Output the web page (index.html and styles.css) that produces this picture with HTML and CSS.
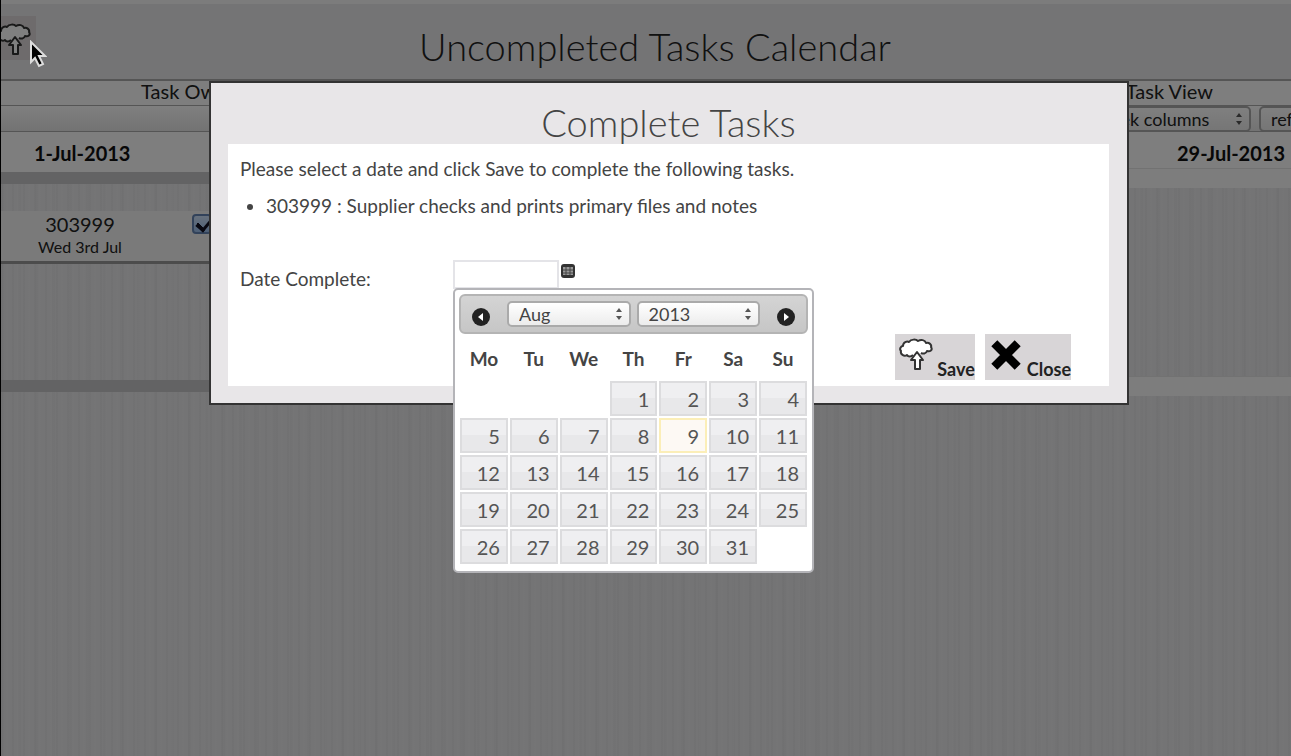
FILE: index.html
```html
<!DOCTYPE html>
<html lang="en">
<head>
    <meta charset="UTF-8">
    <meta name="viewport" content="width=device-width, initial-scale=1.0">
    <title>Uncompleted Tasks Calendar</title>
    <link rel="stylesheet" href="styles.css">
</head>
<body>
    <!-- shared icons -->
    <svg class="sprite" aria-hidden="true">
        <symbol id="icon-cloud" viewBox="0 0 34 34">
            <path d="M14 17 C12 19 9 19 8 17 C5 19 1 16 2 13 C0 11 2 8 4 8 C4 4 8 3 10 4 C12 1 17 1 19 3 C22 1 26 2 27 5 C30 4 33 7 32 9 C34 12 31 14 28 13 C27 16 24 16 22 15" />
            <path d="M18 14 L24 22 L21 22 L21 31 L16 31 L16 22 L12 22 Z" />
        </symbol>
        <symbol id="icon-arrows" viewBox="0 0 8 14">
            <path d="M4 1 L7 5 L1 5 Z M1 9 L7 9 L4 13 Z" />
        </symbol>
    </svg>

    <div class="page">
        <header class="page-header">
            <button class="header-save" aria-label="Save"><svg class="cloud"><use href="#icon-cloud" /></svg></button>
            <h1>Uncompleted Tasks Calendar</h1>
        </header>

        <div class="toolbar-labels">
            <span class="owner">Task Owner</span>
            <span class="view">Task View</span>
        </div>
        <div class="toolbar">
            <span class="select-wrap view-select">
                <select aria-label="Task View"><option>week columns</option></select>
                <svg class="arrows"><use href="#icon-arrows" /></svg>
            </span>
            <button class="refresh">refresh</button>
        </div>
        <div class="dates">
            <strong>1-Jul-2013</strong>
            <strong>29-Jul-2013</strong>
        </div>
        <div class="band"><div class="band-end"></div></div>
        <div class="week">
            <div class="task">
                <label for="task1">303999<small>Wed 3rd Jul</small></label>
                <input type="checkbox" id="task1" checked>
            </div>
        </div>
        <div class="band"><div class="band-end"></div></div>
    </div>

    <div class="overlay"></div>

    <div class="dialog" role="dialog" aria-labelledby="dialogTitle">
        <h2 id="dialogTitle">Complete Tasks</h2>
        <div class="dialog-body">
            <p>Please select a date and click Save to complete the following tasks.</p>
            <ul>
                <li>303999 : Supplier checks and prints primary files and notes</li>
            </ul>
            <div class="date-row">
                <label for="dateComplete">Date Complete:</label>
                <div class="date-field">
                    <input type="text" id="dateComplete">
                    <button class="trigger" aria-label="Open calendar">
                        <svg viewBox="0 0 14 14">
                            <rect x="0" y="0" width="14" height="14" rx="3" fill="#333" />
                            <path d="M2 3H12V11H2Z" fill="#999" />
                            <path d="M2 6H12M2 9H12M5 3V11M9 3V11" stroke="#444" />
                        </svg>
                    </button>

                    <div class="datepicker">
                        <div class="datepicker-header">
                            <button class="nav" aria-label="Prev"><svg viewBox="0 0 18 18"><circle cx="9" cy="9" r="9" /><path d="M11 5 L6 9 L11 13 Z" /></svg></button>
                            <span class="select-wrap">
                                <select aria-label="Month"><option>Aug</option></select>
                                <svg class="arrows"><use href="#icon-arrows" /></svg>
                            </span>
                            <span class="select-wrap">
                                <select aria-label="Year"><option>2013</option></select>
                                <svg class="arrows"><use href="#icon-arrows" /></svg>
                            </span>
                            <button class="nav" aria-label="Next"><svg viewBox="0 0 18 18"><circle cx="9" cy="9" r="9" /><path d="M7 5 L12 9 L7 13 Z" /></svg></button>
                        </div>
                        <table>
                            <thead>
                                <tr><th>Mo</th><th>Tu</th><th>We</th><th>Th</th><th>Fr</th><th>Sa</th><th>Su</th></tr>
                            </thead>
                            <tbody>
                                <tr><td></td><td></td><td></td><td><a href="#">1</a></td><td><a href="#">2</a></td><td><a href="#">3</a></td><td><a href="#">4</a></td></tr>
                                <tr><td><a href="#">5</a></td><td><a href="#">6</a></td><td><a href="#">7</a></td><td><a href="#">8</a></td><td><a href="#" class="today">9</a></td><td><a href="#">10</a></td><td><a href="#">11</a></td></tr>
                                <tr><td><a href="#">12</a></td><td><a href="#">13</a></td><td><a href="#">14</a></td><td><a href="#">15</a></td><td><a href="#">16</a></td><td><a href="#">17</a></td><td><a href="#">18</a></td></tr>
                                <tr><td><a href="#">19</a></td><td><a href="#">20</a></td><td><a href="#">21</a></td><td><a href="#">22</a></td><td><a href="#">23</a></td><td><a href="#">24</a></td><td><a href="#">25</a></td></tr>
                                <tr><td><a href="#">26</a></td><td><a href="#">27</a></td><td><a href="#">28</a></td><td><a href="#">29</a></td><td><a href="#">30</a></td><td><a href="#">31</a></td><td></td></tr>
                            </tbody>
                        </table>
                    </div>
                </div>
            </div>
            <div class="actions">
                <button class="action"><svg class="cloud"><use href="#icon-cloud" /></svg>Save</button>
                <button class="action"><svg class="cross" viewBox="0 0 32 32"><path d="M5 5 L27 27 M27 5 L5 27" /></svg>Close</button>
            </div>
        </div>
    </div>

    <svg class="pointer" viewBox="0 0 18 28" aria-hidden="true">
        <path d="M2 2 L2 22 L6 18 L10 26 L14 24 L10 16 L16 16 Z" />
    </svg>
</body>
</html>
```

FILE: styles.css
```css
* {
    box-sizing: border-box;
}

body {
    margin: 0;
    font-family: Lato, "Liberation Sans", sans-serif;
    font-size: 20px;
    color: #444;
}

button, select, input {
    font: inherit;
    color: inherit;
    margin: 0;
}

.sprite {
    display: none;
}

/* page behind the dialog */
.page {
    min-height: 100vh;
    overflow: hidden;
    border-left: 1px solid #000;
    color: #222;
    background:
        repeating-linear-gradient(90deg, rgba(0, 0, 0, 0.02) 0 2px, transparent 2px 5px, rgba(255, 255, 255, 0.08) 5px 7px, transparent 7px 11px),
        repeating-linear-gradient(90deg, rgba(0, 0, 0, 0.01) 0 3px, transparent 3px 17px),
        #e8e8ea;
}

.page-header {
    position: relative;
    height: 81px;
    padding: 18px 0 0 18px;
    border-top: 4px solid #f8f8f8;
    border-bottom: 2px solid #aaa;
    background: #e8e8eb;
}

.page-header h1 {
    margin: 0;
    text-align: center;
    font-size: 38px;
    line-height: 48px;
    font-weight: 300;
}

.header-save {
    position: absolute;
    left: -4px;
    top: 12px;
    width: 39px;
    height: 44px;
    padding: 3px 0 0;
    border: none;
    background: #dcd6d8;
}

.cloud {
    display: block;
    width: 34px;
    height: 34px;
    fill: #fff;
    stroke: #333;
    stroke-width: 2;
    stroke-linejoin: round;
}

.toolbar-labels {
    display: flex;
    justify-content: space-between;
    height: 24px;
    padding: 0 78px 0 140px;
    line-height: 20px;
    background: #fcfcfc;
}

.toolbar {
    display: flex;
    justify-content: flex-end;
    gap: 8px;
    height: 27px;
    border-top: 1px solid #aaa;
    border-bottom: 1px solid #aaa;
    background: linear-gradient(#fff, #e6e6e6);
}

.select-wrap {
    position: relative;
    display: block;
}

.select-wrap select {
    appearance: none;
    display: block;
    width: 100%;
    height: 26px;
    padding: 0 10px;
    border: 2px solid #aaa;
    border-radius: 5px;
    background: linear-gradient(#fff, #ececec);
    font-size: 18px;
    line-height: 20px;
}

.arrows {
    position: absolute;
    right: 8px;
    top: 6px;
    width: 8px;
    height: 14px;
    fill: #555;
}

.view-select {
    width: 180px;
}

.view-select select {
    padding-left: 24px;
}

.refresh {
    width: 90px;
    height: 26px;
    margin-right: -58px;
    padding: 0 10px;
    border: 2px solid #aaa;
    border-radius: 5px;
    background: linear-gradient(#fff, #ececec);
    font-size: 18px;
    line-height: 20px;
    text-align: left;
}

.dates {
    display: flex;
    justify-content: space-between;
    height: 40px;
    padding: 0 6px 0 33px;
    line-height: 42px;
    background: #fcfcfc;
    color: #111;
}

.band {
    display: flex;
    justify-content: flex-end;
    height: 12px;
    background: #c6c6c9;
}

.band-end {
    width: 163px;
    height: 20px;
    margin-top: -4px;
    border-top: 1px solid #e4e4e4;
    background: #fafafb;
}

.week {
    height: 196px;
    padding-top: 27px;
}

.task {
    display: flex;
    align-items: flex-start;
    gap: 70px;
    width: 226px;
    height: 53px;
    padding-left: 37px;
    border-bottom: 3px solid #999;
    background: #f4f4f4;
}

.task label {
    width: 84px;
    line-height: 26px;
    text-align: center;
}

.task small {
    display: block;
    font-size: 16px;
    line-height: 20px;
    white-space: nowrap;
}

.task input {
    appearance: none;
    width: 20px;
    height: 20px;
    margin-top: 3px;
    border: 2px solid #6484b4;
    border-radius: 4px;
    background:
        linear-gradient(45deg, transparent 42%, #112 42% 58%, transparent 58%) 3px 7px / 7px 7px no-repeat,
        linear-gradient(#cfe2fa, #9cc0ee);
}

.task input::after {
    content: "";
    display: block;
    width: 7px;
    height: 12px;
    margin: 0 0 0 5px;
    border: solid #112;
    border-width: 0 3px 3px 0;
    transform: rotate(40deg);
}

.overlay {
    position: fixed;
    inset: 0;
    background: rgba(0, 0, 0, 0.5);
}

/* dialog */
.dialog {
    position: absolute;
    top: 81px;
    left: 209px;
    right: 162px;
    padding: 18px 18px 17px 17px;
    border: 2px solid #333;
    background: #e8e6e8;
}

.dialog h2 {
    margin: 0;
    font-size: 38px;
    line-height: 43px;
    font-weight: 300;
    text-align: center;
}

.dialog-body {
    padding: 12px;
    background: #fff;
    font-size: 19px;
}

.dialog-body p {
    margin: 0;
    line-height: 26px;
}

.dialog-body ul {
    margin: 12px 0 42px;
    padding-left: 26px;
    line-height: 24px;
}

.date-row {
    display: flex;
}

.date-row label {
    width: 213px;
    padding-top: 7px;
    line-height: 24px;
}

.date-field {
    position: relative;
    display: flex;
    gap: 2px;
    align-items: flex-start;
}

.date-field input {
    width: 106px;
    height: 29px;
    border: 2px solid #e4e4e8;
    background: #fff;
}

.trigger {
    width: 14px;
    height: 14px;
    margin-top: 4px;
    padding: 0;
    border: none;
    background: none;
}

.trigger svg, .nav svg {
    display: block;
    width: 100%;
    height: 100%;
}

.actions {
    display: flex;
    gap: 10px;
    justify-content: flex-end;
    padding: 43px 26px 0 0;
    margin-bottom: -6px;
}

.action {
    display: flex;
    align-items: flex-end;
    gap: 4px;
    height: 46px;
    padding: 0;
    border: none;
    background: #d8d5d7;
    color: #222;
    font-size: 18px;
    font-weight: 700;
    line-height: 22px;
}

.action svg {
    align-self: flex-start;
    margin: 4px 0 0 4px;
}

.cross {
    width: 34px;
    height: 34px;
    fill: none;
    stroke: #000;
    stroke-width: 8;
}

/* datepicker */
.datepicker {
    position: absolute;
    top: 28px;
    left: 0;
    width: 361px;
    padding: 4px;
    border: 2px solid #b4b4b8;
    border-radius: 5px;
    background: #fff;
    font-size: 20px;
}

.datepicker-header {
    display: flex;
    gap: 6px;
    height: 40px;
    padding: 5px 11px;
    border: 2px solid #b4b4b4;
    border-radius: 6px;
    background: linear-gradient(#d4d4d4, #c6c6c6);
}

.datepicker-header .select-wrap {
    flex: 1;
}

.nav {
    width: 18px;
    height: 18px;
    margin: 7px 11px 0 0;
    padding: 0;
    border: none;
    background: none;
    fill: #222;
}

.nav:last-child {
    margin: 7px 0 0 11px;
}

.nav path {
    fill: #fff;
}

.datepicker table {
    width: 100%;
    margin: 2px 0;
    border-collapse: collapse;
}

.datepicker th {
    height: 44px;
    padding: 0;
    font-size: 19px;
    font-weight: 700;
}

.datepicker td {
    padding: 1px;
}

.datepicker td a {
    display: block;
    height: 35px;
    padding: 0 6px;
    border: 2px solid #dcdcde;
    background: linear-gradient(#efeff1 50%, #e8e8ea 50%);
    color: #555;
    line-height: 32px;
    text-align: right;
    text-decoration: none;
}

.datepicker td a.today {
    border-color: #fbeeb8;
    background: #fdf9f4;
}

.pointer {
    position: absolute;
    left: 29px;
    top: 40px;
    width: 18px;
    height: 28px;
    fill: #000;
    stroke: #ddd;
    stroke-width: 2;
}
```
